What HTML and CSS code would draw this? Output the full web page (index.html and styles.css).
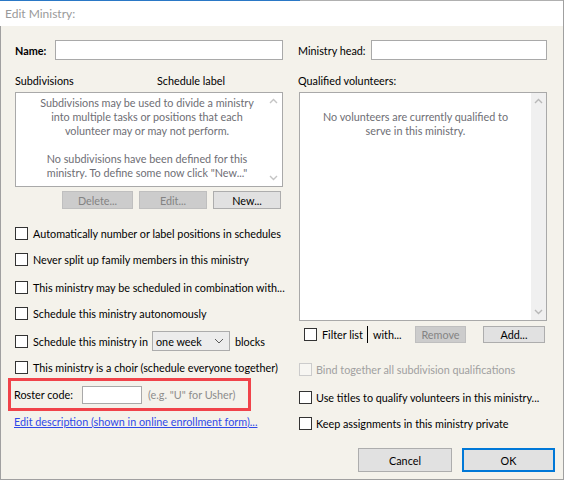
FILE: index.html
```html
<!DOCTYPE html>
<html>
<head>
<meta charset="utf-8">
<title>Edit Ministry</title>
<link rel="stylesheet" href="styles.css">
</head>
<body>
<div class="dialog">
  <div class="topline"></div>
  <div class="titlebar"><span class="title">Edit Ministry:</span></div>
  <div class="content">
    <div class="col left">
      <div class="field">
        <span class="lbl bold w-name">Name:</span>
        <div class="input grow"></div>
      </div>
      <div class="header"><span class="h-sub">Subdivisions</span><span>Schedule label</span></div>
      <div class="listbox sub-list">
        <div class="list-msg sub-msg">Subdivisions may be used to divide a ministry<br>into multiple tasks or positions that each<br>volunteer may or may not perform.<br>&nbsp;<br>No subdivisions have been defined for this<br>ministry. To define some now click "New..."</div>
        <div class="vscroll plain">
          <svg class="arr up" width="9" height="6" viewBox="0 0 9 6"><polyline points="1,5 4.5,1.5 8,5" fill="none" stroke="#c4c4c4" stroke-width="1.4"/></svg>
          <svg class="arr down" width="9" height="6" viewBox="0 0 9 6"><polyline points="1,1 4.5,4.5 8,1" fill="none" stroke="#c4c4c4" stroke-width="1.4"/></svg>
        </div>
      </div>
      <div class="btn-row">
        <div class="btn disabled w-del">Delete...</div>
        <div class="btn disabled w-edit">Edit...</div>
        <div class="btn w-new">New...</div>
      </div>
      <div class="check m14"><span class="box"></span><span>Automatically number or label positions in schedules</span></div>
      <div class="check m6"><span class="box"></span><span>Never split up family members in this ministry</span></div>
      <div class="check m8"><span class="box"></span><span>This ministry may be scheduled in combination with...</span></div>
      <div class="check m6"><span class="box"></span><span>Schedule this ministry autonomously</span></div>
      <div class="check m8"><span class="box"></span><span class="w-sched">Schedule this ministry in</span>
        <div class="select"><span>one week</span>
          <svg class="chev" width="10" height="6" viewBox="0 0 10 6"><polyline points="1,1 5,5 9,1" fill="none" stroke="#5a5a5a" stroke-width="1"/></svg>
        </div>
        <span class="blocks">blocks</span>
      </div>
      <div class="check m6"><span class="box"></span><span>This ministry is a choir (schedule everyone together)</span></div>
      <div class="roster">
        <span class="w-roster">Roster code:</span>
        <div class="input roster-input"></div>
        <span class="hint">(e.g. "U" for Usher)</span>
      </div>
      <a class="link" href="#">Edit description (shown in online enrollment form)...</a>
    </div>
    <div class="col right">
      <div class="field">
        <span class="lbl w-head">Ministry head:</span>
        <div class="input grow"></div>
      </div>
      <div class="header"><span>Qualified volunteers:</span></div>
      <div class="listbox q-list">
        <div class="list-msg q-msg">No volunteers are currently qualified to<br>serve in this ministry.</div>
        <div class="vscroll track">
          <svg class="arr up" width="9" height="6" viewBox="0 0 9 6"><polyline points="1,5 4.5,1.5 8,5" fill="none" stroke="#b8b8b8" stroke-width="1.4"/></svg>
          <svg class="arr down" width="9" height="6" viewBox="0 0 9 6"><polyline points="1,1 4.5,4.5 8,1" fill="none" stroke="#b8b8b8" stroke-width="1.4"/></svg>
        </div>
      </div>
      <div class="filter-row">
        <span class="box f-box"></span>
        <span class="w-filter">Filter list</span>
        <span class="bar"></span>
        <span class="w-with">with...</span>
        <div class="btn disabled w-remove">Remove</div>
        <div class="btn w-add">Add...</div>
      </div>
      <div class="check rc m16"><span class="box off"></span><span class="gray">Bind together all subdivision qualifications</span></div>
      <div class="check rc m8"><span class="box"></span><span>Use titles to qualify volunteers in this ministry...</span></div>
      <div class="check rc m6"><span class="box"></span><span>Keep assignments in this ministry private</span></div>
      <div class="dlg-buttons">
        <div class="btn big w-cancel">Cancel</div>
        <div class="btn big ok w-ok">OK</div>
      </div>
    </div>
  </div>
</div>
</body>
</html>
```

FILE: styles.css
```css
* { box-sizing: border-box; }
html, body { margin: 0; padding: 0; }
body {
  width: 564px;
  height: 481px;
  overflow: hidden;
  font-family: Lato, "Liberation Sans", sans-serif;
  font-size: 10.8px;
  color: #000;
  background: #ffffff;
}
.dialog {
  width: 564px;
  height: 480px;
  display: flex;
  flex-direction: column;
  background: #f4f2eb;
  border-right: 1px solid #a0a0a0;
  border-bottom: 1px solid #a0a0a0;
}
.topline {
  height: 1px;
  background: linear-gradient(to right, #2a78c6 0, #2a78c6 300px, #b0b0b0 300px);
}
.titlebar {
  height: 25px;
  background: #fff;
  display: flex;
  align-items: center;
  padding-left: 5px;
}
.title { color: #9a9a9a; font-size: 12px; }
.content {
  flex: 1;
  display: flex;
  gap: 15px;
  padding: 14px 0 0 14px;
  border-left: 1px solid #a0a0a0;
}
.col { display: flex; flex-direction: column; }
.left { width: 268px; }
.right { width: 249px; }

.field { height: 20px; display: flex; align-items: center; white-space: nowrap; }
.bold { font-weight: bold; }
.w-name { width: 40px; }
.w-head { width: 73px; }
.input { height: 20px; background: #fff; border: 1px solid #a9a9a9; }
.grow { flex: 1; }

.header { margin-top: 13px; height: 16px; line-height: 16px; display: flex; white-space: nowrap; }
.h-sub { width: 142px; }

.listbox { position: relative; background: #fff; border: 1px solid #a9a9a9; margin-top: 3px; }
.sub-list { height: 95px; }
.q-list { height: 229px; margin-left: 1px; width: 248px; }
.list-msg { text-align: center; line-height: 14px; color: #6e6e74; white-space: nowrap; }
.sub-msg { padding-top: 3px; padding-right: 4px; }
.q-msg { padding-top: 17px; padding-right: 15px; }
.vscroll { position: absolute; top: 0; right: 0; bottom: 0; width: 15px; display: flex; flex-direction: column; justify-content: space-between; align-items: center; padding: 5px 0 5px; }
.vscroll.plain { width: 17px; }
.vscroll.track { background: #f0f0f0; }

.btn-row { margin-top: 4px; height: 18px; display: flex; justify-content: flex-end; gap: 6px; padding-right: 2px; }
.btn {
  height: 100%;
  display: flex;
  align-items: center;
  justify-content: center;
  background: #e1e1e1;
  border: 1px solid #adadad;
  white-space: nowrap;
}
.btn.disabled { background: #cccccc; border-color: #bfbfbf; color: #838383; }
.w-del { width: 71px; }
.w-edit { width: 68px; }
.w-new { width: 68px; }

.check { height: 20px; display: flex; align-items: center; gap: 5px; white-space: nowrap; }
.box { width: 13px; height: 13px; border: 1px solid #333; background: #fff; flex: none; }
.box.off { border-color: #cccccc; background: #f7f6f2; }
.gray { color: #a0a0a0; }
.m14 { margin-top: 14px; }
.m6 { margin-top: 6px; }
.m8 { margin-top: 8px; }
.m16 { margin-top: 16px; }
.rc { gap: 4px; padding-left: 1px; }

.w-sched { width: 114px; }
.select {
  width: 78px;
  height: 20px;
  background: #ececec;
  border: 1px solid #acacac;
  display: flex;
  align-items: center;
  justify-content: space-between;
  padding: 0 5px 0 3px;
}
.blocks { margin-left: 0; }

.roster {
  margin-top: 1px;
  margin-left: -7px;
  width: 243px;
  height: 33px;
  border: 3px solid #f0434a;
  display: flex;
  align-items: center;
  padding-left: 3px;
  white-space: nowrap;
}
.w-roster { width: 68px; }
.roster-input { width: 60px; height: 18px; }
.hint { margin-left: 6px; color: #8c8c8c; }
.link {
  margin-top: 3px;
  margin-left: -1px;
  height: 16px;
  line-height: 16px;
  color: #2f49e8;
  text-decoration: underline;
  white-space: nowrap;
}

.filter-row { margin-top: 5px; height: 17px; display: flex; align-items: center; white-space: nowrap; }
.f-box { margin-left: 6px; }
.w-filter { margin-left: 5px; width: 43px; }
.bar { width: 1px; height: 17px; background: #000; margin-left: 2px; }
.w-with { margin-left: 5px; width: 42px; }
.w-remove { width: 51px; }
.w-add { width: 62px; margin-left: 17px; }

.dlg-buttons { margin-top: 15px; height: 24px; display: flex; justify-content: flex-end; gap: 10px; margin-right: -8px; }
.w-cancel { width: 94px; }
.w-ok { width: 93px; }
.btn.ok { border: 2px solid #0078d7; }
```
